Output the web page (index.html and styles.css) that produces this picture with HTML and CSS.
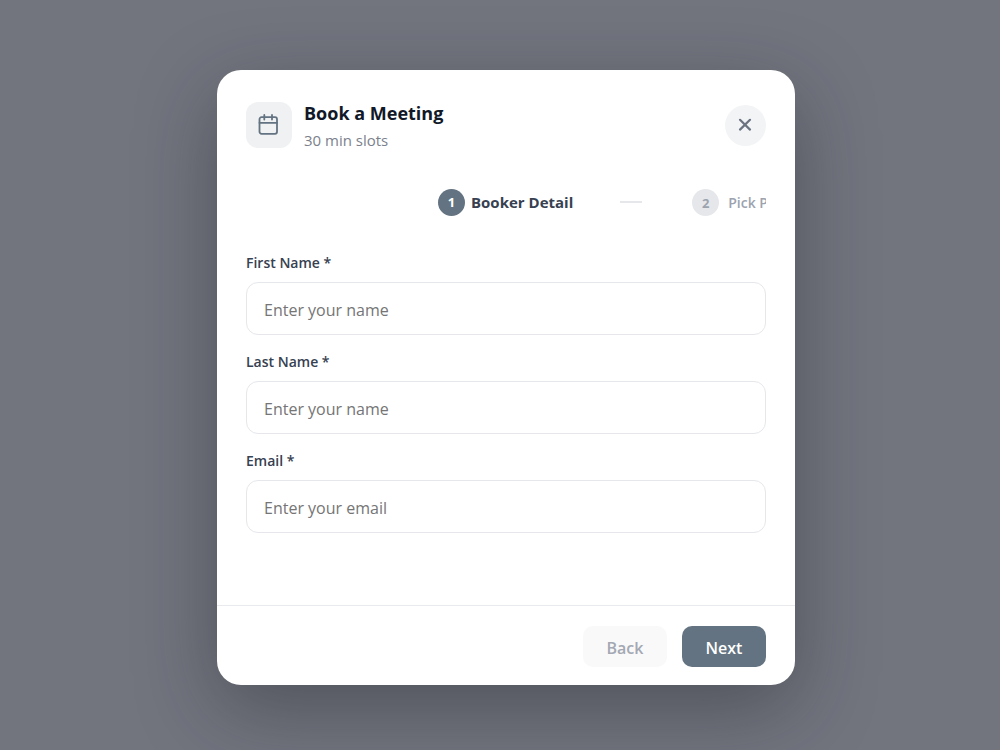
FILE: index.html
```html
<!DOCTYPE html>
<html lang="en">
<head>
<meta charset="utf-8">
<meta name="viewport" content="width=device-width, initial-scale=1">
<title>Book a Meeting</title>
<link rel="stylesheet" href="styles.css">
</head>
<body>
<div class="overlay">
  <form class="modal" role="dialog" aria-labelledby="title">
    <header class="header">
      <span class="header-icon">
        <svg width="24" height="24" viewBox="0 0 24 24" fill="none" stroke="currentColor" stroke-width="1.8" stroke-linecap="round" stroke-linejoin="round" aria-hidden="true"><rect x="2.5" y="4.2" width="17.5" height="16.6" rx="2"/><path d="M2.5 9.8h17.5M7.3 2v4.5M15 2v4.5"/></svg>
      </span>
      <div class="heading">
        <h1 class="title" id="title">Book a Meeting</h1>
        <p class="subtitle">30 min slots</p>
      </div>
      <button class="close" type="button" aria-label="Close">
        <svg width="20" height="20" viewBox="0 0 20 20" fill="none" stroke="currentColor" stroke-width="2.2" stroke-linecap="round" aria-hidden="true"><path d="M4 4.8l10 9.8M14 4.8L4 14.6"/></svg>
      </button>
    </header>
    <ol class="steps">
      <li class="step step-active"><span class="badge">1</span><span>Booker Detail</span></li>
      <li class="line" aria-hidden="true"></li>
      <li class="step"><span class="badge">2</span><span>Pick Package</span></li>
    </ol>
    <div class="fields">
      <div class="field">
        <label class="label" for="first">First Name *</label>
        <input class="input" id="first" type="text" placeholder="Enter your name">
      </div>
      <div class="field">
        <label class="label" for="last">Last Name *</label>
        <input class="input" id="last" type="text" placeholder="Enter your name">
      </div>
      <div class="field">
        <label class="label" for="email">Email *</label>
        <input class="input" id="email" type="email" placeholder="Enter your email">
      </div>
    </div>
    <footer class="footer">
      <button class="button" type="button" disabled>Back</button>
      <button class="button button-primary" type="submit">Next</button>
    </footer>
  </form>
</div>
</body>
</html>
```

FILE: styles.css
```css
* { box-sizing: border-box; }

body {
  margin: 0;
  font-family: "Segoe UI", "Open Sans", "Noto Sans", sans-serif;
  color: #374151;
}

.overlay {
  display: flex;
  align-items: center;
  justify-content: center;
  min-height: 100vh;
  padding: 5px 0 0 12px;
  background: #72757e;
  overflow: hidden;
}

.modal {
  width: 100%;
  max-width: 578px;
  background: #fff;
  border-radius: 24px;
  box-shadow: 0 24px 80px rgba(30, 30, 40, 0.4);
}

.header {
  display: flex;
  align-items: center;
  gap: 12px;
  padding: 30px 29px 0;
}

.header-icon {
  display: grid;
  place-items: center;
  width: 46px;
  height: 46px;
  border-radius: 12px;
  background: #eff1f2;
  color: #637381;
}

.heading { flex: 1; }

.title {
  margin: 0;
  font-size: 18px;
  line-height: 26px;
  font-weight: 700;
  color: #111827;
}

.subtitle {
  margin: 0;
  padding-top: 4px;
  font-size: 15px;
  line-height: 20px;
  color: #7b818c;
}

.close {
  display: grid;
  place-items: center;
  width: 41px;
  height: 41px;
  padding: 0;
  border: 0;
  border-radius: 50%;
  background: #f3f4f6;
  color: #6b7280;
}

.steps {
  display: flex;
  align-items: center;
  margin: 38px 29px 0;
  padding: 0 0 0 192px;
  list-style: none;
  overflow: hidden;
}

.step {
  display: flex;
  flex: none;
  align-items: center;
  gap: 9px;
  padding-top: 1px;
  font-size: 14px;
  line-height: 20px;
  font-weight: 600;
  color: #9ca3af;
}

.step-active {
  gap: 6px;
  padding-top: 0;
  font-size: 15px;
  font-weight: 700;
  color: #374151;
}

.badge {
  display: grid;
  place-items: center;
  width: 27px;
  height: 27px;
  border-radius: 50%;
  background: #e5e7eb;
  font-size: 13px;
  font-weight: 700;
}

.step-active .badge {
  background: #637381;
  color: #fff;
}

.line {
  flex: none;
  width: 22px;
  height: 2px;
  margin: 0 50px 0 47px;
  background: #e5e7eb;
}

.fields {
  display: grid;
  gap: 17px;
  padding: 37px 29px 72px;
}

.field {
  display: grid;
  gap: 9px;
}

.label {
  font-size: 14px;
  line-height: 20px;
  font-weight: 600;
  color: #374151;
}

.input {
  width: 100%;
  height: 53px;
  padding: 2px 17px 0;
  border: 1px solid #e5e7eb;
  border-radius: 12px;
  background: #fff;
  font: inherit;
  font-size: 16px;
  color: #374151;
}

.input::placeholder {
  color: #757575;
  opacity: 1;
}

.footer {
  display: flex;
  justify-content: flex-end;
  gap: 15px;
  padding: 20px 29px 18px;
  border-top: 1px solid #e9eaed;
}

.button {
  min-width: 84px;
  height: 41px;
  padding: 2px 20px 0;
  border: 0;
  border-radius: 10px;
  background: #f9f9fa;
  font: inherit;
  font-size: 16px;
  font-weight: 600;
  color: #a3a8b2;
}

.button-primary {
  background: #637381;
  color: #fff;
}
```
